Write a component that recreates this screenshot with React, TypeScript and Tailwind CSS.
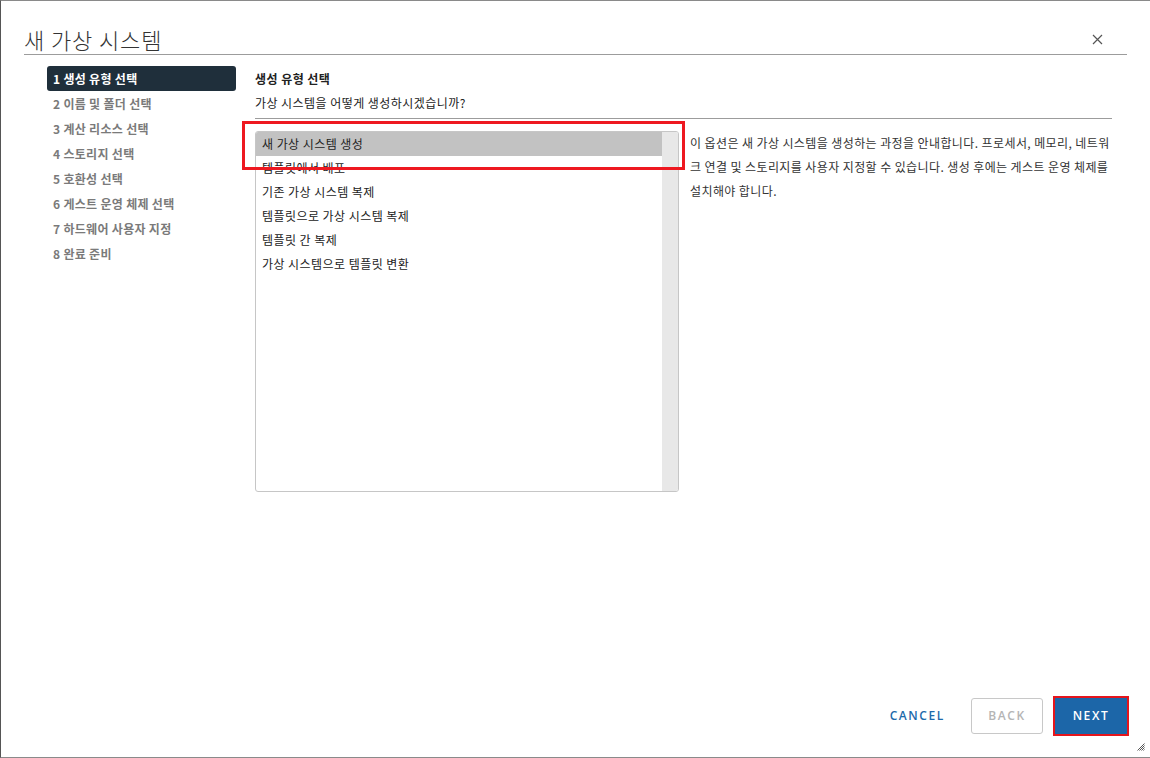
const navSteps = [
  '1 생성 유형 선택',
  '2 이름 및 폴더 선택',
  '3 계산 리소스 선택',
  '4 스토리지 선택',
  '5 호환성 선택',
  '6 게스트 운영 체제 선택',
  '7 하드웨어 사용자 지정',
  '8 완료 준비',
]

const creationTypes = [
  '새 가상 시스템 생성',
  '템플릿에서 배포',
  '기존 가상 시스템 복제',
  '템플릿으로 가상 시스템 복제',
  '템플릿 간 복제',
  '가상 시스템으로 템플릿 변환',
]

const ko = { fontFamily: '"Noto Sans CJK KR", "Noto Sans", sans-serif' }
const latin = { fontFamily: '"Open Sans", "Noto Sans CJK KR", sans-serif' }

export default function App() {
  const active = 0
  const selected = 0

  return (
    <div
      style={ko}
      className="relative flex h-[758px] w-full flex-col border-t border-b border-l border-t-[#8a8a8a] border-b-[#8a8a8a] border-l-[#555] bg-white tracking-[0.45px] text-[#222]"
    >
      {/* Header */}
      <div className="ml-[23px] mr-[23px] flex h-[54px] items-center justify-between border-b border-[#9c9c9c] pt-[22px]">
        <h1 className="text-[22px] font-light leading-[30px] tracking-[0.9px] text-[#333]">새 가상 시스템</h1>
        <button className="mr-[24px] mt-[2px] text-[#555]">
          <svg width="11" height="11" viewBox="0 0 11 11" fill="none" stroke="currentColor" strokeWidth="1.2">
            <path d="M1 1l9 9M10 1l-9 9" />
          </svg>
        </button>
      </div>

      {/* Body */}
      <div className="flex flex-1 pl-[46px] pt-[11px]">
        <nav className="w-[189px]">
          {navSteps.map((label, i) => (
            <div
              key={label}
              className={`flex h-[25px] items-center rounded-[3px] px-[6px] text-[12px] font-bold tracking-[0.3px] ${
                i === active ? 'bg-[#1f2f3b] text-white' : 'text-[#7a7a7a]'
              }`}
            >
              {label}
            </div>
          ))}
        </nav>

        <div className="ml-[19px] w-[857px]">
          <div className="flex h-[25px] items-center text-[12px] font-bold text-[#222]">생성 유형 선택</div>
          <div className="flex h-[24px] items-center text-[12px] text-[#222]">가상 시스템을 어떻게 생성하시겠습니까?</div>
          <div className="mt-[3px] border-t border-[#9c9c9c]" />

          <div className="mt-[12px] flex">
            <div className="relative flex h-[361px] w-[424px] shrink-0 overflow-hidden rounded-[3px] border border-[#c6c6c6]">
              <ul className="flex-1">
                {creationTypes.map((label, i) => (
                  <li
                    key={label}
                    className={`flex h-[24px] items-center px-[6px] text-[12px] text-[#222] ${
                      i === selected ? 'bg-[#c2c2c2]' : ''
                    }`}
                  >
                    {label}
                  </li>
                ))}
              </ul>
              <div className="w-[16px] bg-[#e8e8e8]" />
            </div>

            <p className="ml-[11px] flex-1 text-[12px] leading-[24px] tracking-[0.4px] text-[#333]">
              이 옵션은 새 가상 시스템을 생성하는 과정을 안내합니다. 프로세서, 메모리, 네트워크 연결 및 스토리지를 사용자 지정할 수 있습니다. 생성 후에는 게스트 운영 체제를 설치해야 합니다.
            </p>
          </div>
        </div>
      </div>

      {/* annotation over the selected row */}
      <span className="pointer-events-none absolute left-[241px] top-[120px] h-[49px] w-[443px] border-[3px] border-[#ee1820]" />

      {/* Footer */}
      <div style={latin} className="flex items-center justify-end pb-[23px] pr-[23px] tracking-normal">
        <button className="h-9 px-3 text-[12px] font-semibold tracking-[1.6px] text-[#1d6aaa]">CANCEL</button>
        <button className="ml-[14px] h-9 w-[72px] rounded-[3px] border border-[#c8c8c8] text-[12px] font-semibold tracking-[1.6px] text-[#b5b5b5]">
          BACK
        </button>
        <button className="ml-3 h-9 w-[72px] bg-[#1c66a8] text-[12px] font-semibold tracking-[1.6px] text-white ring-2 ring-[#e5151c]">
          NEXT
        </button>
      </div>

      {/* resize grip */}
      <svg className="absolute bottom-[6px] right-[5px]" width="9" height="9" viewBox="0 0 9 9" stroke="#444" strokeWidth="0.9">
        <path d="M8.5 1.5L1.5 8.5M8.5 3.5L3.5 8.5M8.5 5.5L5.5 8.5M8.5 7.5L7.5 8.5" />
      </svg>
    </div>
  )
}
